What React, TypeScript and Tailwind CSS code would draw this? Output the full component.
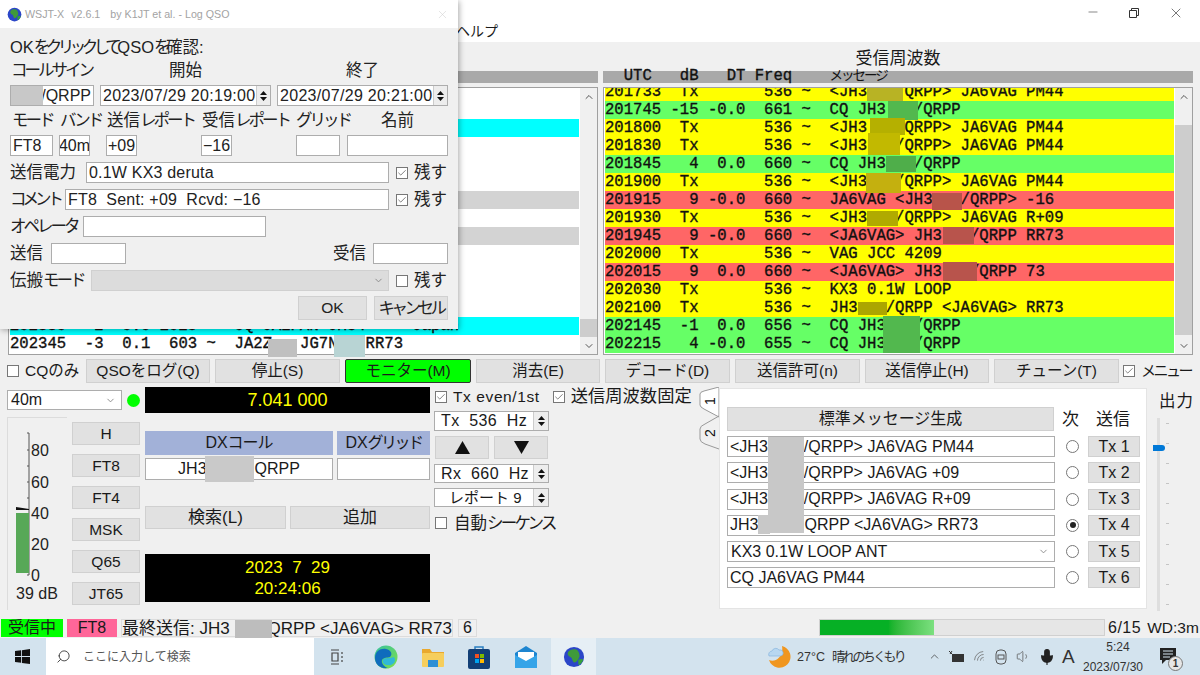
import React from 'react';
import { ChevronDown, ChevronUp, Check, Minus, X, Search, Mic, Volume1, Wifi } from 'lucide-react';

type Row = { text: string; bg: string };

const YELLOW = 'bg-[#ffff00]';
const GREEN = 'bg-[#66ff66]';
const RED = 'bg-[#ff6666]';

const rxRows: Row[] = [
  { text: '201733  Tx       536 ~  <JH3   /QRPP> JA6VAG PM44', bg: YELLOW },
  { text: '201745 -15 -0.0  661 ~  CQ JH3   /QRPP', bg: GREEN },
  { text: '201800  Tx       536 ~  <JH3   /QRPP> JA6VAG PM44', bg: YELLOW },
  { text: '201830  Tx       536 ~  <JH3   /QRPP> JA6VAG PM44', bg: YELLOW },
  { text: '201845   4  0.0  660 ~  CQ JH3   /QRPP', bg: GREEN },
  { text: '201900  Tx       536 ~  <JH3   /QRPP> JA6VAG PM44', bg: YELLOW },
  { text: '201915   9 -0.0  660 ~  JA6VAG <JH3   /QRPP> -16', bg: RED },
  { text: '201930  Tx       536 ~  <JH3   /QRPP> JA6VAG R+09', bg: YELLOW },
  { text: '201945   9 -0.0  660 ~  <JA6VAG> JH3   /QRPP RR73', bg: RED },
  { text: '202000  Tx       536 ~  VAG JCC 4209', bg: YELLOW },
  { text: '202015   9  0.0  660 ~  <JA6VAG> JH3   /QRPP 73', bg: RED },
  { text: '202030  Tx       536 ~  KX3 0.1W LOOP', bg: YELLOW },
  { text: '202100  Tx       536 ~  JH3   /QRPP <JA6VAG> RR73', bg: YELLOW },
  { text: '202145  -1  0.0  656 ~  CQ JH3   /QRPP', bg: GREEN },
  { text: '202215   4 -0.0  655 ~  CQ JH3   /QRPP', bg: GREEN },
];

const bandRows: Row[] = [
  { text: '', bg: '' },
  { text: '', bg: '' },
  { text: '', bg: 'bg-[#00ffff]' },
  { text: '', bg: '' },
  { text: '', bg: '' },
  { text: '', bg: '' },
  { text: '', bg: 'bg-[#d3d3d3]' },
  { text: '', bg: '' },
  { text: '', bg: 'bg-[#d3d3d3]' },
  { text: '', bg: '' },
  { text: '', bg: '' },
  { text: '', bg: '' },
  { text: '', bg: '' },
  { text: '202330   2  0.0 2025 ~  CQ JA2PAN JM84     Japan', bg: 'bg-[#00ffff]' },
  { text: '202345  -3  0.1  603 ~  JA2Z   JG7N   RR73', bg: '' },
];

// redaction smudges over the rx list, relative to the list frame
const rxBlobs = [
  'left-[263px] top-[0px] w-[36px] h-[13px] bg-[#b8b324]',
  'left-[284px] top-[13px] w-[30px] h-[19px] bg-[#52b84e]',
  'left-[266px] top-[30px] w-[35px] h-[17px] bg-[#b5b000]',
  'left-[264px] top-[45px] w-[32px] h-[22px] bg-[#c2b900]',
  'left-[282px] top-[68px] w-[30px] h-[16px] bg-[#4fae4a]',
  'left-[262px] top-[85px] w-[35px] h-[20px] bg-[#c4b00f]',
  'left-[328px] top-[105px] w-[30px] h-[17px] bg-[#b8544a]',
  'left-[263px] top-[123px] w-[31px] h-[15px] bg-[#b0aa00]',
  'left-[339px] top-[139px] w-[31px] h-[17px] bg-[#b8544c]',
  'left-[339px] top-[174px] w-[34px] h-[19px] bg-[#b8544c]',
  'left-[254px] top-[214px] w-[29px] h-[13px] bg-[#aca500]',
  'left-[279px] top-[228px] w-[37px] h-[37px] bg-[#52b84e]',
];

// kana in the window font is narrower than kanji
const K: React.FC<{ children: React.ReactNode; className?: string }> = ({ children, className = 'tracking-[-3px]' }) => (
  <span className={className}>{children}</span>
);

const Btn: React.FC<{ className?: string; bg?: string; children?: React.ReactNode }> = ({ className = '', bg = 'bg-[#e1e1e1] border-[#d0d0d0]', children }) => (
  <div className={`flex items-center justify-center border text-[15.5px] leading-none whitespace-nowrap ${bg} ${className}`}>
    {children}
  </div>
);

const Field: React.FC<{ className?: string; children?: React.ReactNode }> = ({ className = '', children }) => (
  <div className={`flex items-center bg-white border border-[#adadad] px-[2px] text-[16px] leading-none whitespace-nowrap overflow-hidden ${className}`}>
    {children}
  </div>
);

const CheckBox: React.FC<{ checked?: boolean; className?: string }> = ({ checked, className = '' }) => (
  <div className={`flex items-center justify-center w-[12px] h-[12px] bg-white border border-[#777] shrink-0 ${className}`}>
    {checked && <Check size={10} strokeWidth={1.6} className="text-[#444]" />}
  </div>
);

const Radio: React.FC<{ on?: boolean }> = ({ on }) => (
  <div className="flex items-center justify-center w-[13px] h-[13px] rounded-full bg-white border border-[#777] ml-[11px] shrink-0">
    {on && <div className="w-[6px] h-[6px] rounded-full bg-[#222]" />}
  </div>
);

const Spinner: React.FC = () => (
  <div className="ml-auto -mr-[2px] w-[15px] self-stretch flex flex-col items-center justify-center gap-[2px] bg-[#ededed] border-l border-[#ccc] text-[#111]">
    <svg width="7" height="4" viewBox="0 0 7 4"><path d="M3.5 0L7 4H0z" fill="currentColor" /></svg>
    <svg width="7" height="4" viewBox="0 0 7 4"><path d="M3.5 4L0 0h7z" fill="currentColor" /></svg>
  </div>
);

const Globe: React.FC<{ size: number }> = ({ size }) => (
  <svg width={size} height={size} viewBox="0 0 24 24">
    <circle cx="12" cy="12" r="11" fill="#2b46c8" />
    <path d="M6 6c3-3 8-3 10-1 2 3 3 6 1 9-2 4-5 5-6 3s-1-4-3-5-4-3-2-6z" fill="#3f9a3a" />
    <path d="M17 15c2-1 4-1 5 0-1 3-3 5-5 6 0-2-1-4 0-6z" fill="#36a13b" />
  </svg>
);

const LogDialog: React.FC = () => (
  <div className="absolute left-0 top-0 w-[458px] h-[329px] bg-[#f0f0f0] shadow-[1px_1px_6px_rgba(0,0,0,0.35)] flex flex-col text-[16.5px] leading-none text-[#222] whitespace-nowrap">
    <div className="h-[28px] bg-white flex items-center pl-[7px] pr-[9px] shrink-0">
      <Globe size={15} />
      <span className="ml-[3px] text-[10.7px] text-[#a3a3a3]">WSJT-X</span>
      <span className="ml-[7px] text-[10.7px] text-[#a3a3a3]">v2.6.1</span>
      <span className="ml-[10px] text-[10.7px] text-[#a3a3a3]">by K1JT et al. - Log QSO</span>
      <X size={13} strokeWidth={1} className="ml-auto text-[#cfcfcf]" />
    </div>
    <div className="pl-[10px] flex flex-col">
      <div className="mt-[11px] h-[16px] flex items-center">
        <span>OK<K className="tracking-[-4.5px]">をクリックして</K>QSO<K className="tracking-[-4.5px]">を</K>確認:</span>
      </div>
      <div className="mt-[6px] h-[18px] flex items-center">
        <span className="ml-[1px] w-[158px]"><K>コールサイン</K></span>
        <span className="w-[177px]">開始</span>
        <span>終了</span>
      </div>
      <div className="mt-[6px] flex">
        <Field className="relative w-[84px] h-[21px] justify-end">
          <span>/QRPP</span>
          <div className="absolute left-0 top-0 w-[32px] h-full bg-[#c8c8c8]" />
        </Field>
        <Field className="w-[171px] h-[21px] ml-[6px] tracking-[0.3px]">2023/07/29 20:19:00<Spinner /></Field>
        <Field className="w-[171px] h-[21px] ml-[6px] tracking-[0.3px]">2023/07/29 20:21:00<Spinner /></Field>
      </div>
      <div className="mt-[5px] h-[18px] flex items-center">
        <span className="ml-[2px] w-[48px]"><K>モード</K></span>
        <span className="w-[47px]"><K>バンド</K></span>
        <span className="w-[95px]">送信<K>レポート</K></span>
        <span className="w-[94px]">受信<K>レポート</K></span>
        <span className="w-[85px]"><K>グリッド</K></span>
        <span>名前</span>
      </div>
      <div className="mt-[6px] flex">
        <Field className="w-[43px] h-[21px]">FT8</Field>
        <Field className="w-[31px] h-[21px] ml-[6px] justify-center">40m</Field>
        <Field className="w-[31px] h-[21px] ml-[16px] justify-center">+09</Field>
        <Field className="w-[31px] h-[21px] ml-[64px] justify-center">−16</Field>
        <Field className="w-[44px] h-[21px] ml-[64px]" />
        <Field className="w-[101px] h-[21px] ml-[7px]" />
      </div>
      <div className="mt-[6px] flex items-center">
        <span className="w-[76px] shrink-0">送信電力</span>
        <Field className="w-[303px] h-[21px] text-[15.5px] tracking-[0.2px]">0.1W KX3 deruta</Field>
        <CheckBox checked className="ml-[7px]" />
        <span className="ml-[6px]">残す</span>
      </div>
      <div className="mt-[6px] flex items-center">
        <span className="w-[55px] shrink-0"><K className="tracking-[-4px]">コメント</K></span>
        <Field className="w-[324px] h-[21px] text-[15.5px] whitespace-pre tracking-[0.2px]">FT8  Sent: +09  Rcvd: −16</Field>
        <CheckBox checked className="ml-[7px]" />
        <span className="ml-[6px]">残す</span>
      </div>
      <div className="mt-[6px] flex items-center">
        <span className="w-[73px] shrink-0"><K>オペレータ</K></span>
        <Field className="w-[183px] h-[21px]" />
      </div>
      <div className="mt-[6px] flex items-center">
        <span className="w-[41px] shrink-0">送信</span>
        <Field className="w-[75px] h-[21px]" />
        <span className="ml-[207px] w-[40px] shrink-0">受信</span>
        <Field className="w-[75px] h-[21px]" />
      </div>
      <div className="mt-[6px] flex items-center">
        <span className="w-[81px] shrink-0">伝搬<K>モード</K></span>
        <div className="w-[298px] h-[21px] flex items-center justify-end pr-[4px] bg-[#dcdcdc] border border-[#d0d0d0]">
          <ChevronDown size={11} className="text-[#888]" />
        </div>
        <CheckBox className="ml-[7px]" />
        <span className="ml-[6px]">残す</span>
      </div>
      <div className="mt-[5px] flex justify-end pr-[10px] gap-[7px]">
        <Btn className="w-[69px] h-[24px]">OK</Btn>
        <Btn className="w-[74px] h-[24px] text-[16.5px]"><K className="tracking-[-3.5px]">キャンセル</K></Btn>
      </div>
    </div>
  </div>
);

const ScrollBar: React.FC<{ thumb: string }> = ({ thumb }) => (
  <div className="w-[17px] shrink-0 bg-[#f0f0f0] flex flex-col items-center text-[#555]">
    <div className="h-[17px] flex items-center justify-center shrink-0">
      <ChevronUp size={12} strokeWidth={2} />
    </div>
    <div className="flex-1 w-full relative">
      <div className={`absolute left-0 right-0 bg-[#cdcdcd] ${thumb}`} />
    </div>
    <div className="h-[17px] flex items-center justify-center shrink-0">
      <ChevronDown size={12} strokeWidth={2} />
    </div>
  </div>
);

const ListRows: React.FC<{ rows: Row[] }> = ({ rows }) => (
  <div className="flex-1 min-w-0 bg-white pl-px overflow-hidden font-['Liberation_Mono',monospace] text-[15.6px] text-[#111] [-webkit-text-stroke:0.35px_#111]">
    <div className="-mt-[5px]">
      {rows.map((r, i) => (
        <div key={i} className={`h-[18px] leading-[18px] whitespace-pre mr-[1px] ${r.bg}`}>{r.text}</div>
      ))}
    </div>
  </div>
);

const Meter: React.FC = () => (
  <div className="w-[60px] h-[193px] shrink-0 border-l border-t border-[#dcdcdc]">
    <svg width="60" height="193" viewBox="0 0 60 193" className="block -ml-px -mt-px">
      <path d="M22 16v142" stroke="#555" fill="none" />
      {[16, 33, 49, 65, 81, 97, 112, 128, 143, 158].map((y) => (
        <path key={y} d={`M20 ${y}h2`} stroke="#555" />
      ))}
      <rect x="9" y="96" width="13" height="60" fill="#57a857" />
      <path d="M9 90l13 2v1H9z" fill="#111" />
      <g fontSize="16" fill="#222">
        <text x="24" y="39">80</text>
        <text x="24" y="71">60</text>
        <text x="24" y="102">40</text>
        <text x="24" y="133">20</text>
        <text x="24" y="164">0</text>
        <text x="9" y="182">39 dB</text>
      </g>
    </svg>
  </div>
);

const msgRows = [
  { text: ['<JH3', '/QRPP> JA6VAG PM44'], gap: 'w-[36px]' },
  { text: ['<JH3', '/QRPP> JA6VAG +09'], gap: 'w-[36px]' },
  { text: ['<JH3', '/QRPP> JA6VAG R+09'], gap: 'w-[36px]' },
  { text: ['JH3', 'QRPP <JA6VAG> RR73'], gap: 'w-[46px]' },
];

const TabStrip: React.FC = () => (
  <svg width="20" height="64" viewBox="0 0 20 64" className="shrink-0 mt-[2px] text-[#222]">
    <path d="M20 30L5 22Q1 20 1 18V7Q1 5 5 4L20 0z" fill="#fff" stroke="#999" />
    <path d="M20 29L6 37Q1 39 1 42V52Q1 55 6 57L20 62" fill="none" stroke="#999" />
    <text transform="rotate(-90 12 14)" x="12" y="14" fontSize="14" textAnchor="middle" dominantBaseline="middle" fill="#111">1</text>
    <text transform="rotate(-90 12 46)" x="12" y="46" fontSize="14" textAnchor="middle" dominantBaseline="middle" fill="#111">2</text>
  </svg>
);

const TxPanel: React.FC = () => (
  <div className="relative w-[428px] h-[221px] bg-white border border-[#e4e4e4] mt-[3px] pl-[7px] pt-[18px] shrink-0 text-[16px]">
    <div className="flex items-center h-[24px]">
      <Btn className="w-[327px] h-[24px] text-[16px]">標準メッセージ生成</Btn>
      <span className="ml-[8px] text-[17px]">次</span>
      <span className="ml-[17px] text-[17px]">送信</span>
    </div>
    <div className="mt-[5px] flex flex-col gap-[5.3px]">
      {msgRows.map((r, i) => (
        <div key={i} className="flex items-center">
          <Field className="w-[328px] h-[21px] text-[16.5px]">
            <span>{r.text[0]}</span>
            <span className={`inline-block ${r.gap}`} />
            <span>{r.text[1]}</span>
          </Field>
          <Radio on={i === 3} />
          <Btn className="w-[52px] h-[21px] ml-[9px] text-[16px] whitespace-pre">{`Tx ${i + 1}`}</Btn>
        </div>
      ))}
      <div className="flex items-center">
        <Field className="w-[328px] h-[21px] pl-[3px] text-[16.5px]">
          KX3 0.1W LOOP ANT
          <ChevronDown size={11} className="ml-auto mr-[3px] text-[#888]" />
        </Field>
        <Radio />
        <Btn className="w-[52px] h-[21px] ml-[9px] text-[16px] whitespace-pre">Tx 5</Btn>
      </div>
      <div className="flex items-center">
        <Field className="w-[328px] h-[21px] text-[16.5px]">CQ JA6VAG PM44</Field>
        <Radio />
        <Btn className="w-[52px] h-[21px] ml-[9px] text-[16px] whitespace-pre">Tx 6</Btn>
      </div>
    </div>
    <div className="absolute left-[48px] top-[48px] w-[36px] h-[96px] bg-[#c8c8c8]" />
    <div className="absolute left-[38px] top-[126px] w-[12px] h-[19px] bg-[#c8c8c8]" />
  </div>
);

const OutputSlider: React.FC = () => (
  <div className="flex flex-col ml-[6px] w-[45px] shrink-0">
    <span className="mt-[8px] ml-[6px] text-[16.5px] leading-none tracking-[1px]">出力</span>
    <div className="relative mt-[8px] h-[193px]">
      <div className="absolute left-[4px] top-0 w-[3px] h-full bg-[#dedede]" />
      <div className="absolute left-0 top-[27px] w-[12px] h-[6px] bg-[#0078d7] rounded-r-[3px]" />
      <div className="absolute left-[13px] top-[5px] flex flex-col gap-[19.2px]">
        {Array.from({ length: 10 }).map((_, i) => (
          <div key={i} className="w-[3px] h-px bg-[#c4c4c4]" />
        ))}
      </div>
    </div>
  </div>
);

const LowerSection: React.FC = () => (
  <div className="flex h-[234px] mt-[2px] shrink-0 text-[16px] leading-none">
    {/* band, meter and mode buttons */}
    <div className="ml-[7px] w-[133px] shrink-0 flex flex-col">
      <div className="flex items-center mt-[5px]">
        <Field className="w-[116px] h-[20px] pl-[3px]">
          40m
          <ChevronDown size={11} className="ml-auto mr-[3px] text-[#888]" />
        </Field>
        <div className="ml-[5px] w-[13px] h-[13px] rounded-full bg-[#00ff00]" />
      </div>
      <div className="flex mt-[7px]">
        <Meter />
        <div className="ml-[5px] mt-[5px] flex flex-col gap-[9px]">
          {['H', 'FT8', 'FT4', 'MSK', 'Q65', 'JT65'].map((m) => (
            <Btn key={m} className="w-[68px] h-[23px]">{m}</Btn>
          ))}
        </div>
      </div>
    </div>

    {/* frequency, dx call, clock */}
    <div className="ml-[5px] w-[285px] shrink-0 flex flex-col relative">
      <div className="mt-[2px] h-[26px] bg-black text-[#ffff00] text-[18px] flex items-center justify-center whitespace-pre">7.041 000</div>
      <div className="mt-[18px] flex gap-[4px]">
        <div className="w-[188px] h-[24px] bg-[#a2b1d8] flex items-center justify-center">DX<K className="tracking-[-1px]">コール</K></div>
        <div className="w-[93px] h-[24px] bg-[#a2b1d8] flex items-center justify-center">DX<K className="tracking-[-2.5px]">グリッド</K></div>
      </div>
      <div className="mt-[3px] flex gap-[4px]">
        <Field className="w-[188px] h-[22px] justify-center">
          <span>JH3</span>
          <span className="inline-block w-[48px]" />
          <span>QRPP</span>
        </Field>
        <Field className="w-[93px] h-[22px]" />
      </div>
      <div className="mt-[26px] flex gap-[4px]">
        <Btn className="w-[141px] h-[23px] text-[17px]">検索(L)</Btn>
        <Btn className="w-[140px] h-[23px] text-[17px]">追加</Btn>
      </div>
      <div className="mt-[25px] h-[48px] bg-black text-[#ffff00] text-[17px] leading-[21px] flex flex-col items-center justify-center whitespace-pre">
        <span>2023  7  29</span>
        <span>20:24:06</span>
      </div>
      <div className="absolute left-[60px] top-[71px] w-[49px] h-[26px] bg-[#c9c9c9]" />
    </div>

    {/* tx / rx controls */}
    <div className="ml-[4px] w-[265px] shrink-0 flex flex-col">
      <div className="mt-[4px] h-[16px] flex items-center whitespace-pre">
        <CheckBox checked className="ml-[1px]" />
        <span className="ml-[6px] text-[15.5px] tracking-[0.6px]">Tx even/1st</span>
        <CheckBox checked className="ml-[13px]" />
        <span className="ml-[6px] text-[17.3px]">送信周波数固定</span>
      </div>
      <Field className="mt-[6px] w-[115px] h-[20px] whitespace-pre justify-center"><span className="ml-[4px] tracking-[0.4px]">Tx  536  Hz</span><Spinner /></Field>
      <div className="mt-[5px] flex gap-[5px] ml-px">
        <Btn className="w-[54px] h-[23px] text-[#111]">
          <svg width="15" height="13" viewBox="0 0 15 13"><path d="M7.5 0L15 13H0z" fill="currentColor" /></svg>
        </Btn>
        <Btn className="w-[54px] h-[23px] text-[#111]">
          <svg width="15" height="13" viewBox="0 0 15 13"><path d="M7.5 13L0 0h15z" fill="currentColor" /></svg>
        </Btn>
      </div>
      <Field className="mt-[5px] w-[115px] h-[19px] whitespace-pre justify-center"><span className="ml-[4px] tracking-[0.4px]">Rx  660  Hz</span><Spinner /></Field>
      <Field className="mt-[5px] w-[115px] h-[19px] whitespace-pre justify-center"><span className="ml-[12px] text-[15px]">レポート 9</span><Spinner /></Field>
      <div className="mt-[8px] flex items-center">
        <CheckBox className="ml-px" />
        <span className="ml-[7px] text-[16.5px]">自動<K className="tracking-[-2.8px]">シーケンス</K></span>
      </div>
    </div>

    <TabStrip />
    <TxPanel />
    <OutputSlider />
  </div>
);

const Taskbar: React.FC = () => (
  <div className="h-[37px] shrink-0 bg-[#d3e3ee] flex items-center relative text-[#333] text-[13px] leading-none">
    <svg width="15" height="15" viewBox="0 0 16 16" className="ml-[15px] shrink-0" fill="#111">
      <path d="M0 2.2l6.5-.9v6.2H0zM7.4 1.2L16 0v7.5H7.4zM0 8.4h6.5v6.3L0 13.8zM7.4 8.4H16V16l-8.6-1.2z" />
    </svg>
    <div className="ml-[16px] w-[268px] h-[37px] bg-white flex items-center shrink-0">
      <Search size={15} strokeWidth={1.4} className="ml-[10px] -scale-x-100 text-[#333]" />
      <span className="ml-[12px] text-[12px] text-[#555]">ここに入力して検索</span>
    </div>
    <svg width="16" height="16" viewBox="0 0 16 16" className="ml-[16px] shrink-0" fill="none" stroke="#444" strokeWidth="1.2">
      <path d="M1 1h8M1 15h8M2 4h6v8H2zM12 3v2M12 7v2M12 11v2" />
    </svg>
    {/* edge */}
    <svg width="24" height="24" viewBox="0 0 24 24" className="ml-[28px] shrink-0">
      <defs>
        <linearGradient id="edgeA" x1="0" y1="0" x2="1" y2="1">
          <stop offset="0" stopColor="#35c1a0" />
          <stop offset="1" stopColor="#7fe04a" />
        </linearGradient>
      </defs>
      <circle cx="12" cy="12" r="11.5" fill="url(#edgeA)" />
      <path d="M1 13C1 6 7 3 12 4c5 1 7 5 4 8-3 1-6 0-8 3-1 3 2 7 6 8C7 24 1 20 1 13z" fill="#0f6cbd" />
      <path d="M9 15c2-3 6-1 11-3 3 4-1 9-6 8-3 0-6-2-5-5z" fill="#2fb8d8" />
    </svg>
    {/* explorer */}
    <svg width="22" height="20" viewBox="0 0 22 20" className="ml-[24px] shrink-0">
      <path d="M0 2h8l2 3h12v4H0z" fill="#e9a92f" />
      <rect x="0" y="6" width="22" height="14" rx="1" fill="#f6ce5c" />
      <rect x="6" y="13" width="10" height="7" fill="#2d8fd5" />
    </svg>
    {/* store */}
    <svg width="22" height="24" viewBox="0 0 22 24" className="ml-[24px] shrink-0">
      <path d="M7 4V2h8v2" fill="none" stroke="#2a7fc1" strokeWidth="1.5" />
      <rect x="0" y="4" width="22" height="20" rx="2" fill="#123f76" />
      <rect x="7" y="9" width="4" height="4" fill="#f25022" />
      <rect x="12" y="9" width="4" height="4" fill="#7fba00" />
      <rect x="7" y="14" width="4" height="4" fill="#00a4ef" />
      <rect x="12" y="14" width="4" height="4" fill="#ffb900" />
    </svg>
    {/* mail */}
    <svg width="22" height="22" viewBox="0 0 22 22" className="ml-[25px] shrink-0">
      <path d="M0 7L11 0l11 7v15H0z" fill="#1d85d0" />
      <path d="M3 6h16v8l-8 4-8-4z" fill="#fff" />
      <path d="M0 9l11 6 11-6v13H0z" fill="#35a4e8" />
    </svg>
    <div className="ml-[14px] w-[45px] h-[37px] bg-[#e6eff5] flex items-center justify-center shrink-0">
      <Globe size={22} />
    </div>
    {/* weather */}
    <svg width="24" height="24" viewBox="0 0 24 24" className="ml-[172px] shrink-0">
      <path d="M14 1a11 11 0 1 1-13 14c6 3 15-3 13-14z" fill="#f0961f" />
      <path d="M1 11a3.5 3.5 0 0 1 3-5 4 4 0 0 1 7-1 3 3 0 0 1 2 6z" fill="#b8d7f0" stroke="#7fb0dc" strokeWidth="0.6" />
    </svg>
    <span className="ml-[5px] w-[108px] shrink-0 text-[12.5px] whitespace-nowrap">27°C<span className="ml-[7px] text-[13px] tracking-[-2.7px]">晴れのちくもり</span></span>
    <ChevronUp size={13} strokeWidth={1.3} className="ml-[23px] shrink-0" />
    <svg width="16" height="13" viewBox="0 0 16 13" className="ml-[7px] shrink-0">
      <rect x="4" y="4" width="12" height="8" fill="#333" />
      <path d="M1 1l3 3M4 1L2 4" stroke="#333" />
    </svg>
    <Wifi size={14} strokeWidth={1.2} className="ml-[9px] -rotate-45 shrink-0 text-[#666]" />
    <svg width="12" height="16" viewBox="0 0 12 16" className="ml-[8px] shrink-0" fill="none" stroke="#555">
      <rect x="1" y="1" width="10" height="14" rx="4" />
      <rect x="3" y="6" width="6" height="4" />
    </svg>
    <Volume1 size={15} strokeWidth={1.2} className="ml-[9px] shrink-0 text-[#555]" />
    <Mic size={18} fill="#222" strokeWidth={1.6} className="ml-[7px] shrink-0 text-[#222]" />
    <span className="ml-[6px] text-[19px] w-[13px] shrink-0">A</span>
    <div className="ml-[8px] w-[60px] shrink-0 flex flex-col items-center gap-[8px] text-[12px] pt-px">
      <span className="ml-[10px]">5:24</span>
      <span>2023/07/30</span>
    </div>
    <div className="relative ml-[17px] shrink-0">
      <svg width="16" height="17" viewBox="0 0 16 17">
        <path d="M0 0h16v12H6l-4 4v-4H0z" fill="#222" />
        <path d="M3 3h10M3 6h10M3 9h7" stroke="#d3e3ee" />
      </svg>
      <div className="absolute left-[8px] top-[8px] w-[15px] h-[15px] rounded-full bg-[#e6e6e6] border border-[#777] flex items-center justify-center text-[10px] font-bold">1</div>
    </div>
  </div>
);

export default function App() {
  return (
    <div className="relative w-[1200px] h-[675px] overflow-hidden flex flex-col bg-[#f0f0f0] text-[#1a1a1a] font-['Liberation_Sans','Noto_Sans_CJK_JP',sans-serif]">
      <div className="h-[42px] shrink-0 bg-white flex">
        <span className="ml-[456px] mt-[24px] text-[14px] leading-none">ヘルプ</span>
        <div className="ml-auto mr-[16px] mt-[5px] flex gap-[27px] text-[#333]">
          <Minus size={14} strokeWidth={1} />
          <svg width="14" height="14" viewBox="0 0 14 14" fill="none" stroke="currentColor" className="mt-[1px]">
            <path d="M2.5 4.5h7v7h-7zM4.5 4.5v-2h7v7h-2" />
          </svg>
          <X size={16} strokeWidth={1} />
        </div>
      </div>

      <div className="h-[29px] shrink-0 flex items-center">
        <span className="ml-[603px] w-[590px] text-center text-[17px] leading-none mt-[3px]">受信周波数</span>
      </div>

      <div className="h-[12px] shrink-0 flex">
        <div className="w-[598px] bg-[#a9a9a9]" />
        <div className="ml-[5px] w-[590px] bg-[#a9a9a9] pl-[2px] flex items-center font-['Liberation_Mono','Noto_Sans_CJK_JP',monospace] text-[15.6px] leading-none whitespace-pre text-[#111] [-webkit-text-stroke:0.35px_#111]">
          {'  UTC   dB   DT Freq    '}
          <span className="text-[13.5px] tracking-[-2px] [-webkit-text-stroke:0px]">メッセージ</span>
        </div>
      </div>

      <div className="mt-[4px] h-[268px] shrink-0 flex">
        <div className="relative ml-[8px] w-[590px] flex border border-[#a0a0a0] bg-white">
          <ListRows rows={bandRows} />
          <ScrollBar thumb="bottom-[0px] h-[18px]" />
          <div className="absolute left-[259px] top-[251px] w-[29px] h-[18px] bg-[#c0c0c0]" />
          <div className="absolute left-[325px] top-[247px] w-[31px] h-[22px] bg-[#b8d4d4]" />
        </div>
        <div className="relative ml-[5px] w-[590px] flex border border-[#a0a0a0] bg-white">
          <ListRows rows={rxRows} />
          <ScrollBar thumb="top-[20px] h-[210px]" />
          {rxBlobs.map((b, i) => (
            <div key={i} className={`absolute ${b}`} />
          ))}
        </div>
      </div>

      <div className="mt-[4px] h-[24px] shrink-0 flex items-center text-[16px]">
        <CheckBox className="ml-[7px]" />
        <span className="ml-[6px] w-[61px] text-[15.5px] whitespace-nowrap">CQのみ</span>
        <div className="flex gap-[5px]">
          <Btn className="w-[124px] h-[24px]">QSOをログ(Q)</Btn>
          <Btn className="w-[125px] h-[24px]">停止(S)</Btn>
          <Btn className="w-[126px] h-[24px] rounded-[2px]" bg="bg-[#00ff00] border-[#333]">モニター(M)</Btn>
          <Btn className="w-[124px] h-[24px]">消去(E)</Btn>
          <Btn className="w-[125px] h-[24px]">デコード(D)</Btn>
          <Btn className="w-[125px] h-[24px]">送信許可(n)</Btn>
          <Btn className="w-[124px] h-[24px]">送信停止(H)</Btn>
          <Btn className="w-[125px] h-[24px]">チューン(T)</Btn>
        </div>
        <CheckBox checked className="ml-[4px]" />
        <span className="ml-[6px] text-[15px] tracking-[-2.5px] whitespace-nowrap">メニュー</span>
      </div>

      <LowerSection />

      <div className="flex-1 min-h-0 flex items-start text-[16px] leading-none">
        <div className="ml-[1px] w-[62px] h-[18px] bg-[#00ff00] flex items-center justify-center">受信中</div>
        <div className="ml-[4px] w-[50px] h-[18px] bg-[#ff6699] flex items-center justify-center">FT8</div>
        <div className="ml-[4px] w-[332px] h-[18px] border border-[#dcdcdc] flex items-center whitespace-pre relative text-[17px]">
          <span>最終送信: JH3</span>
          <span className="inline-block w-[41px]" />
          <span>/QRPP &lt;JA6VAG&gt; RR73</span>
          <div className="absolute left-[113px] top-[0px] w-[37px] h-[20px] bg-[#bdbdbd]" />
        </div>
        <div className="ml-[5px] w-[19px] h-[18px] border border-[#dcdcdc] flex items-center justify-center">6</div>
        <div className="ml-[342px] w-[286px] h-[17px] bg-[#e6e6e6] border border-[#d0d0d0]">
          <div className="w-[114px] h-full bg-linear-to-r from-[#06b025] from-60% to-[#7be07f]" />
        </div>
        <span className="ml-[3px] h-[18px] flex items-center tracking-[0.5px]">6/15</span>
        <span className="ml-[6px] h-[18px] flex items-center text-[15.5px]">WD:3m</span>
      </div>

      <Taskbar />
      <LogDialog />
    </div>
  );
}
